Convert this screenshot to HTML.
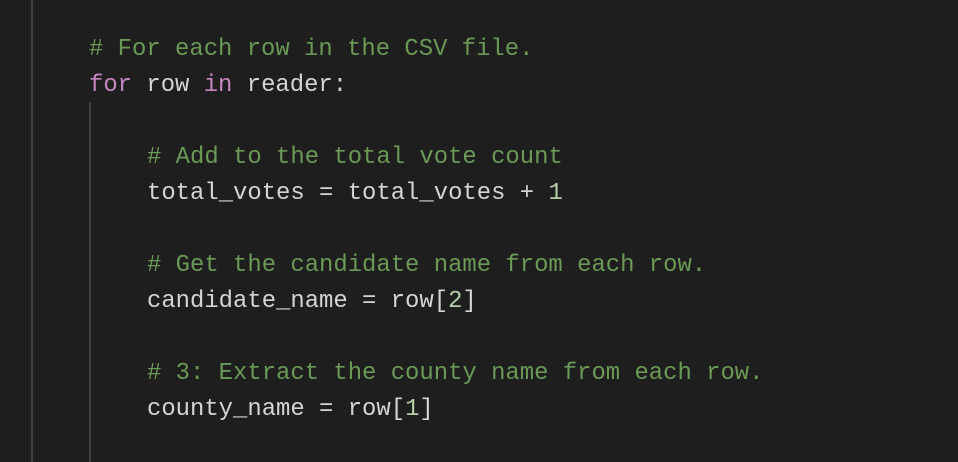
<!DOCTYPE html>
<html><head><style>
body{margin:0;width:958px;height:462px;background:#1e1e1e;overflow:hidden;position:relative;font-family:"Liberation Mono",monospace;font-size:23.9px;color:#d4d4d4}
.l{position:absolute;white-space:pre;line-height:36px;height:36px}
.c{color:#6a9955}.k{color:#c586c0}.n{color:#b5cea8}
.g{position:absolute;width:2px;background:#404040}
</style></head><body>
<div class="g" style="left:31px;top:0;height:462px"></div>
<div class="g" style="left:89px;top:102px;height:360px"></div>
<div class="l c" style="left:89px;top:32px"># For each row in the CSV file.</div>
<div class="l" style="left:89px;top:68px"><span class="k">for</span> row <span class="k">in</span> reader:</div>
<div class="l c" style="left:147px;top:140px"># Add to the total vote count</div>
<div class="l" style="left:147px;top:176px">total_votes = total_votes + <span class="n">1</span></div>
<div class="l c" style="left:147px;top:248px"># Get the candidate name from each row.</div>
<div class="l" style="left:147px;top:284px">candidate_name = row[<span class="n">2</span>]</div>
<div class="l c" style="left:147px;top:356px"># 3: Extract the county name from each row.</div>
<div class="l" style="left:147px;top:392px">county_name = row[<span class="n">1</span>]</div>
</body></html>
